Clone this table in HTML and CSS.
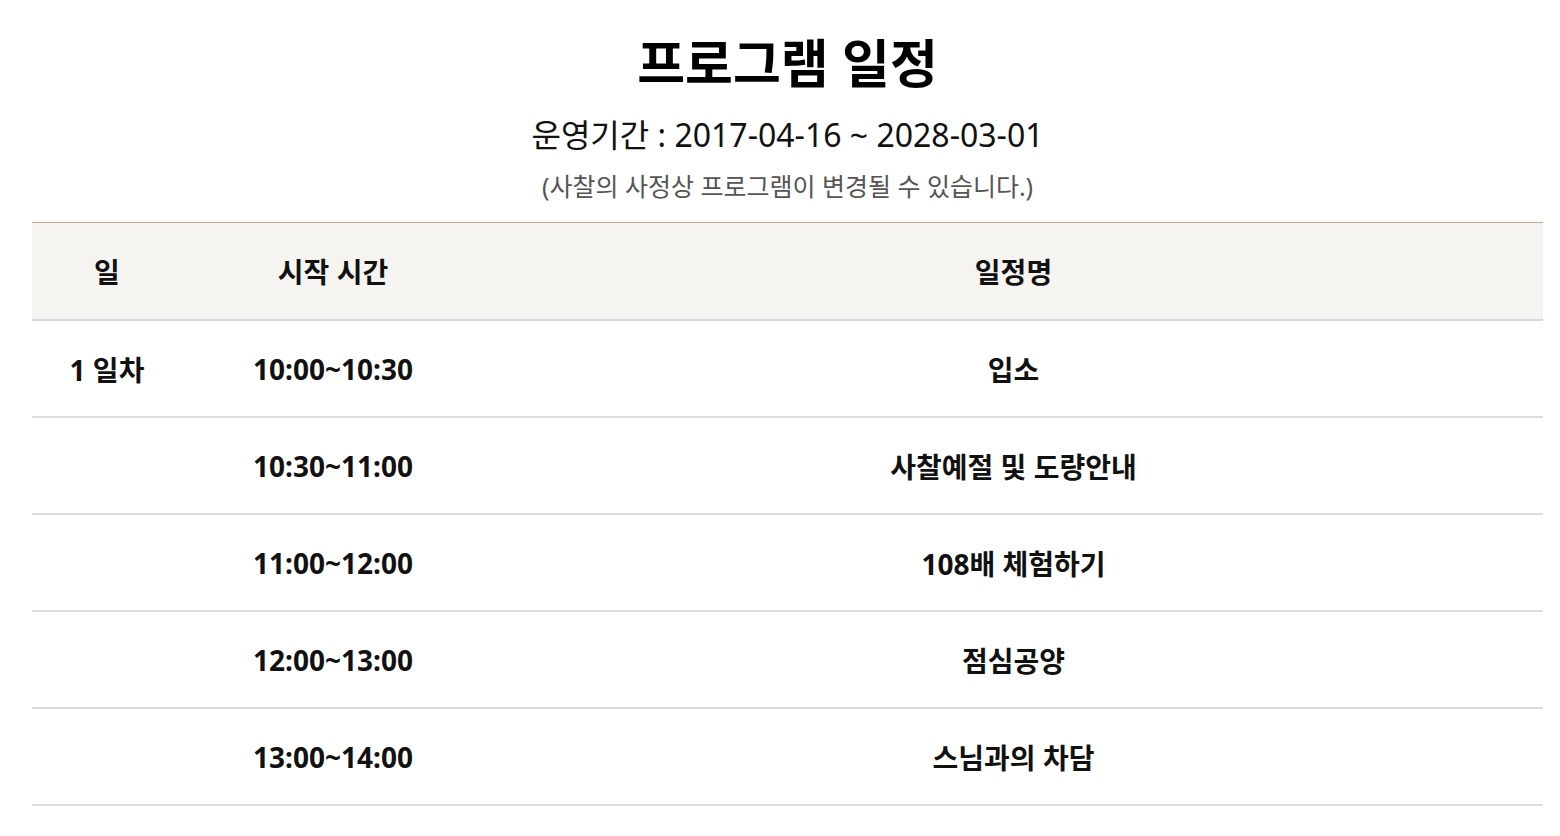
FILE: index.html
```html
<!DOCTYPE html>
<html lang="ko">
<head>
<meta charset="utf-8">
<title>프로그램 일정</title>
<link rel="stylesheet" href="styles.css">
</head>
<body>
<div class="wrap">
  <h1 class="title">프로그램 일정</h1>
  <p class="period">운영기간 : 2017-04-16 ~ 2028-03-01</p>
  <p class="note">(사찰의 사정상 프로그램이 변경될 수 있습니다.)</p>
  <table class="sched">
    <colgroup>
      <col class="c-day">
      <col class="c-time">
      <col class="c-name">
    </colgroup>
    <thead>
      <tr><th>일</th><th>시작 시간</th><th>일정명</th></tr>
    </thead>
    <tbody>
      <tr><td>1 일차</td><td>10:00~10:30</td><td>입소</td></tr>
      <tr><td></td><td>10:30~11:00</td><td>사찰예절 및 도량안내</td></tr>
      <tr><td></td><td>11:00~12:00</td><td>108배 체험하기</td></tr>
      <tr><td></td><td>12:00~13:00</td><td>점심공양</td></tr>
      <tr><td></td><td>13:00~14:00</td><td>스님과의 차담</td></tr>
    </tbody>
  </table>
</div>
</body>
</html>
```

FILE: styles.css
```css
html, body {
  margin: 0;
  padding: 0;
  background: #fff;
}
body {
  font-family: "Noto Sans", "Noto Sans CJK KR", sans-serif;
  color: #111;
}
.wrap {
  width: 1511px;
  margin-left: 32px;
}
.title {
  margin: 0;
  padding-top: 27px;
  font-size: 52px;
  line-height: 72px;
  font-weight: 700;
  text-align: center;
  color: #000;
}
.period {
  margin: 0;
  margin-top: 14px;
  font-size: 32px;
  line-height: 44px;
  text-align: center;
  color: #111;
}
.note {
  margin: 0;
  margin-top: 12px;
  font-size: 25px;
  line-height: 34px;
  text-align: center;
  color: #555;
}
.sched {
  width: 100%;
  margin-top: 19px;
  border-collapse: collapse;
  border-top: 1px solid #c8ab8b;
}
.c-day { width: 150px; }
.c-time { width: 302px; }
.sched th {
  background: #f5f4f1;
  height: 96px;
  padding: 0;
  font-size: 28px;
  font-weight: 700;
  border-bottom: 2px solid #d8d8d8;
}
.sched td {
  height: 95px;
  padding: 0;
  text-align: center;
  font-size: 28px;
  font-weight: 700;
  border-bottom: 2px solid #dcdcdc;
}
```
